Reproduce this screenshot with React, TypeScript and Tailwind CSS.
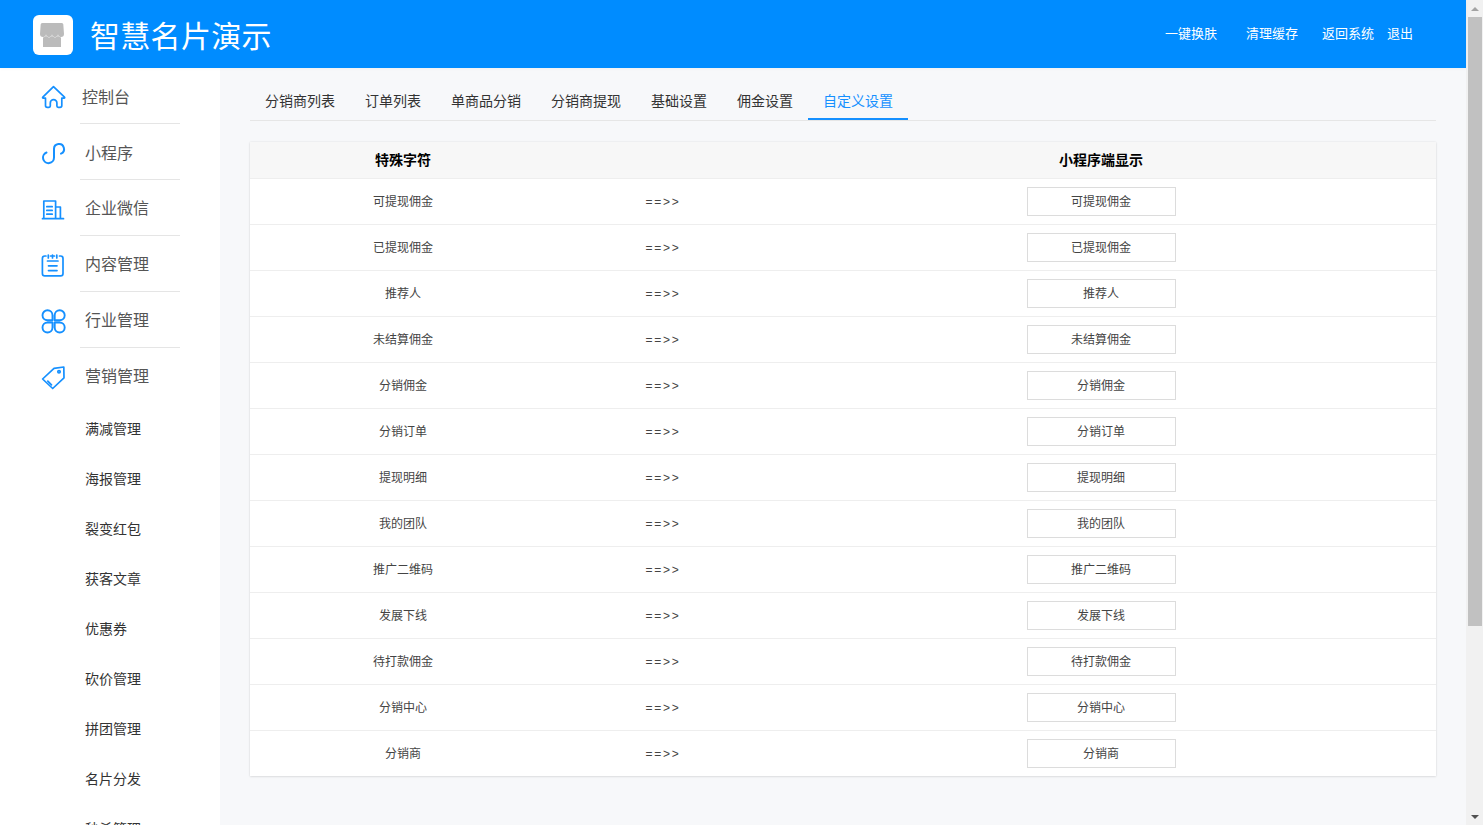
const tabs = ["分销商列表", "订单列表", "单商品分销", "分销商提现", "基础设置", "佣金设置", "自定义设置"];
const rows = ["可提现佣金", "已提现佣金", "推荐人", "未结算佣金", "分销佣金", "分销订单", "提现明细", "我的团队", "推广二维码", "发展下线", "待打款佣金", "分销中心", "分销商"];
const subMenu = ["满减管理", "海报管理", "裂变红包", "获客文章", "优惠券", "砍价管理", "拼团管理", "名片分发", "秒杀管理"];

function Icon({ children }: { children: React.ReactNode }) {
  return (
    <svg viewBox="0 0 26 26" fill="none" stroke="#1590ff" strokeWidth="1.7" strokeLinecap="round" strokeLinejoin="round" className="h-[26px] w-[26px] shrink-0">
      {children}
    </svg>
  );
}

const menu = [
  {
    name: "控制台",
    pad: "pl-[15px] pb-[2px]",
    icon: <path d="M12.5 2.7 1.8 13.2q-.6.8.3 1h2.4v7.3q0 1.8 1.8 1.8H8q1.3 0 1.3-1.3v-3a3.3 3.3 0 0 1 6.6 0v3q0 1.3 1.3 1.3H19q1.8 0 1.8-1.8v-7.3h2.4q.9-.2.3-1Z" />,
  },
  {
    name: "小程序",
    pad: "pl-[18px] pb-[2px]",
    icon: <path d="M5.5 12.5A5.5 5.5 0 1 0 13 17.5V9A5 5 0 1 1 20 13.6" strokeWidth="2" />,
  },
  {
    name: "企业微信",
    pad: "pl-[18px] pb-[4px]",
    icon: <path d="M1.5 22.7h21M2.800 22.700V5h11.800v17.700M14.600 11h4.800v11.700M5.800 10.700h5.400M5.800 14.400h5.400M5.800 18.200h5.400" />,
  },
  {
    name: "内容管理",
    pad: "pl-[18px] pb-[4px]",
    icon: <path d="M5 4H3.800a2.400 2.400 0 0 0-2.400 2.400v15a2.400 2.400 0 0 0 2.400 2.400h15.800a2.400 2.400 0 0 0 2.400-2.400v-15A2.400 2.400 0 0 0 19.600 4H18.500M9.500 4h4M7.300 3v3M11.500 3v3M15.800 3v3M6.500 9h10.500M7.500 13.800h8.500M7.500 18.600h8.500" />,
  },
  {
    name: "行业管理",
    pad: "pl-[18px] pb-[4px]",
    icon: <path d="M11.500 12.300H6.500A5 5 0 1 1 11.500 7.300ZM13.700 12.300H18.700A5 5 0 1 0 13.700 7.300ZM11.500 14.500H6.500A5 5 0 1 0 11.500 19.500ZM13.700 14.500H18.700A5 5 0 1 1 13.700 19.500Z" strokeWidth="1.900" />,
  },
  {
    name: "营销管理",
    pad: "pl-[18px] pb-[4px]",
    icon: (
      <>
        <path d="M13 4.300 22.800 3 23 13.800 11.700 24.500 1.600 15Z" />
        <circle cx="18" cy="7.800" r="1.200" />
        <path d="M6.800 17.200 10.500 20.800" />
      </>
    ),
  },
];

function Sidebar() {
  return (
    <aside className="h-full w-[220px] shrink-0 overflow-hidden bg-white">
      {menu.map((item, i) => (
        <div key={item.name}>
          <div className="flex h-[55px] items-center pl-[41px] pt-[3px]">
            <Icon>{item.icon}</Icon>
            <span className={`${item.pad} text-[16px] text-[#555]`}>{item.name}</span>
          </div>
          {i < menu.length - 1 ? <div className="ml-[80px] h-px w-[100px] bg-[#e5e5e5]" /> : <div className="h-px" />}
        </div>
      ))}
      {subMenu.map((name) => (
        <div key={name} className="flex h-[50px] shrink-0 items-center pb-[2px] pl-[85px] text-[14px] text-[#333]">
          {name}
        </div>
      ))}
    </aside>
  );
}

function Row({ name }: { name: string }) {
  return (
    <div className="grid h-[46px] grid-cols-[306px_212px_1fr] items-center border-b border-[#eeeeee] text-center text-[12px] text-[#444] last:h-[45px] last:border-b-0">
      <div className="pb-px">{name}</div>
      <div className="pl-[2px] font-['Liberation_Sans',sans-serif] tracking-[1.8px]">==&gt;&gt;</div>
      <div className="flex justify-center pr-[2px]">
        <div className="flex h-[29px] w-[149px] items-center justify-center border border-[#dcdcdc] bg-white pb-px">{name}</div>
      </div>
    </div>
  );
}

export default function App() {
  return (
    <div className="flex h-screen overflow-hidden font-['Noto_Sans_CJK_SC','Liberation_Sans',sans-serif]">
      <div className="flex min-w-0 flex-1 flex-col">
        <header className="relative z-10 flex h-[68px] shrink-0 items-center bg-[#008cff] pl-[33px] pr-[53px] text-white shadow-[0_1px_3px_rgba(0,0,0,0.03)]">
          <div className="mt-[2px] flex h-10 w-10 items-center justify-center rounded-[6px] bg-white">
            <svg viewBox="0 0 40 40" className="h-10 w-10">
              <path d="M10 21h18v11H10Z" fill="#bbbbbb" />
              <path d="M9.500 8h19a2 2 0 0 1 1.800 1.200L31 19a3 3 0 0 1-6 0 3 3 0 0 1-6 0 3 3 0 0 1-6 0 3 3 0 0 1-6 0l.7-9.800A2 2 0 0 1 9.500 8Z" fill="#bbbbbb" stroke="#ffffff" strokeWidth="1" paintOrder="stroke" />
            </svg>
          </div>
          <h1 className="ml-[17px] text-[30px] font-normal leading-none tracking-[0.3px]">智慧名片演示</h1>
          <nav className="ml-auto flex pb-[2px] text-[13px]">
            <span>一键换肤</span>
            <span className="ml-[29px]">清理缓存</span>
            <span className="ml-[24px]">返回系统</span>
            <span className="ml-[13px]">退出</span>
          </nav>
        </header>
        <div className="flex min-h-0 flex-1">
          <Sidebar />
          <main className="min-w-0 flex-1 bg-[#f7f8fa] px-[30px] pt-[14px]">
            <div className="flex h-[39px] border-b border-[#e6e6e6]">
              {tabs.map((tab, i) => (
                <div
                  key={tab}
                  className={
                    i === tabs.length - 1
                      ? "flex h-[38px] items-center border-b-2 border-[#1590ff] px-[15px] text-[14px] text-[#1590ff]"
                      : "flex h-[38px] items-center border-b-2 border-transparent px-[15px] text-[14px] text-[#333]"
                  }
                >
                  {tab}
                </div>
              ))}
            </div>
            <div className="mt-[21px] bg-white shadow-[0_0_2px_rgba(0,0,0,0.1),0_1px_2px_rgba(0,0,0,0.08)]">
              <div className="grid h-[37px] grid-cols-[306px_212px_1fr] items-center border-b border-[#eeeeee] bg-[#f7f7f7] pb-[2px] text-center text-[14px] font-bold text-black">
                <div>特殊字符</div>
                <div />
                <div className="pr-[2px]">小程序端显示</div>
              </div>
              {rows.map((name) => (
                <Row key={name} name={name} />
              ))}
            </div>
          </main>
        </div>
      </div>
      <div className="flex w-[17px] shrink-0 flex-col items-center bg-[#f1f1f1]">
        <div className="flex h-[17px] items-center justify-center">
          <div className="h-0 w-0 border-x-[4px] border-b-[4px] border-x-transparent border-b-[#a3a3a3]" />
        </div>
        <div className="h-[609px] w-[14px] bg-[#c1c1c1]" />
        <div className="mt-auto flex h-[17px] items-center justify-center">
          <div className="h-0 w-0 border-x-[4px] border-t-[4px] border-x-transparent border-t-[#505050]" />
        </div>
      </div>
    </div>
  );
}
